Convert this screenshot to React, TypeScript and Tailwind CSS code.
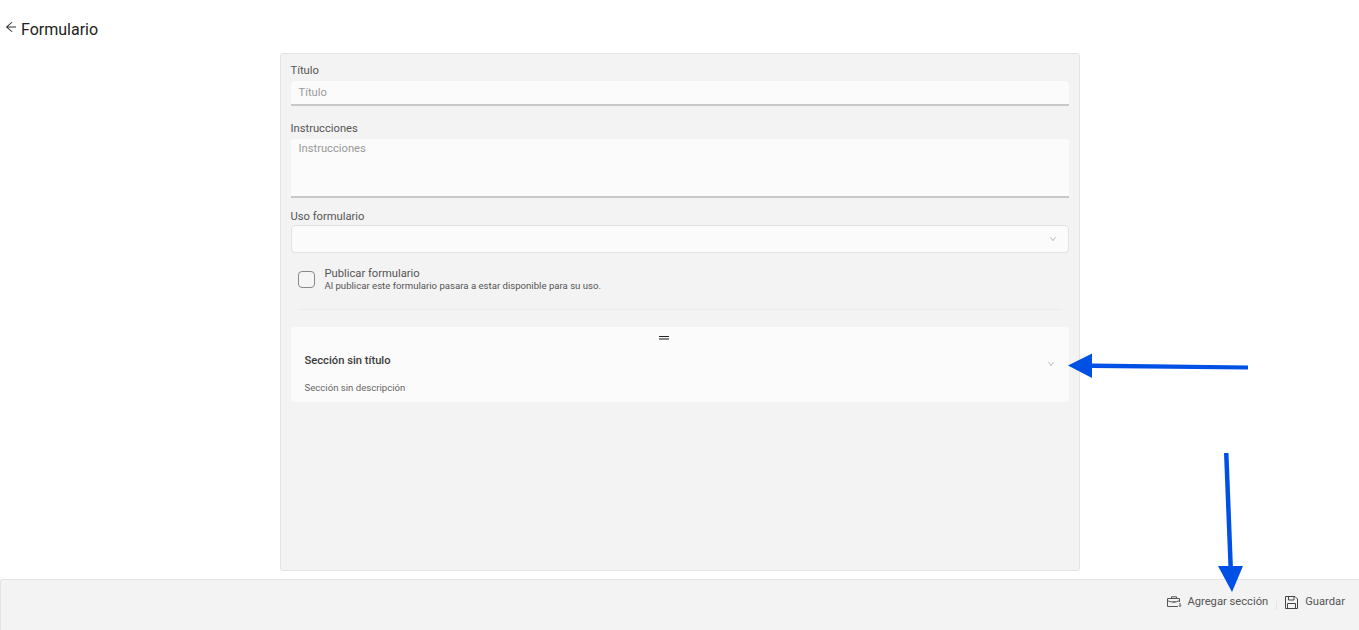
import { AiOutlineArrowLeft, AiOutlineDown } from "react-icons/ai";

function Label({ children }: { children: string }) {
  return <label className="block text-[11.2px] leading-[14px] text-[#555]">{children}</label>;
}

function BriefcaseIcon() {
  return (
    <svg width="15" height="12" viewBox="0 0 15 12" fill="none" stroke="#555" strokeWidth="1">
      <path d="M4.5 2.5V.8h5v1.7" />
      <path d="M12.5 6V2.5H.5v8h10.5" />
      <path d="M.5 4.5c3 2 9 2 12 0" />
      <path d="M5.5 6h3" />
      <path d="M13 7v3.5M12 9.5l1 1 1-1" />
    </svg>
  );
}

function SaveIcon() {
  return (
    <svg width="13" height="13" viewBox="0 0 13 13" fill="none" stroke="#444" strokeWidth="1">
      <path d="M.5.5h9.5l2.5 2.5v9.5H.5z" />
      <path d="M3.5.5v3.5h5.5V.5" />
      <path d="M2.5 12.5V7.5h8v5" />
    </svg>
  );
}

export default function App() {
  return (
    <div className="relative flex h-[630px] flex-col overflow-hidden bg-white font-['Roboto',sans-serif]">
      <header className="flex h-[53px] items-start pl-1 pt-[20px]">
        <AiOutlineArrowLeft className="h-[14px] w-[14px] text-[#333]" />
        <h1 className="ml-[3px] text-[16px] leading-[19px] text-[#222]">Formulario</h1>
      </header>

      <main className="mx-auto h-[518px] w-[800px] rounded-[3px] border border-[#e4e4e4] bg-[#f3f3f3] px-[10px] pt-[10px]">
        <Label>Título</Label>
        <div className="mt-[3px] flex h-[25px] items-center rounded-t-[4px] border-b-2 border-[#c8c8c8] bg-[#fbfbfb] px-2 pt-[2px] text-[11.2px] text-[#999]">
          Título
        </div>

        <div className="mt-[16px]">
          <Label>Instrucciones</Label>
        </div>
        <div className="mt-[3px] h-[59px] rounded-t-[4px] border-b-2 border-[#c8c8c8] bg-[#fbfbfb] px-2 pt-[3px] text-[11.2px] leading-[14px] text-[#999]">
          Instrucciones
        </div>

        <div className="mt-[12px]">
          <Label>Uso formulario</Label>
        </div>
        <div className="mt-px flex h-[28px] items-center justify-end rounded-[4px] border border-[#e2e2e2] bg-[#fbfbfb] pr-[11px]">
          <AiOutlineDown className="h-[8px] w-[8px] text-[#b0b0b0]" />
        </div>

        <div className="mt-[14px] flex items-center pl-[7px]">
          <span className="h-[17px] w-[17px] rounded-[4px] border border-[#888] bg-[#f5f5f5]" />
          <div className="ml-[10px]">
            <p className="text-[11.2px] leading-[13px] text-[#555]">Publicar formulario</p>
            <p className="text-[9.6px] leading-[11px] text-[#555]">
              Al publicar este formulario pasara a estar disponible para su uso.
            </p>
          </div>
        </div>

        <hr className="mx-[7px] mt-[18px] border-[#ebebeb]" />

        <section className="relative mt-[17px] h-[75px] rounded-[4px] bg-[#fbfbfb] px-[13px]">
          <div className="mx-auto flex w-[10px] -translate-x-[16px] flex-col gap-[1px] pt-[9px]">
            <span className="h-px w-[10px] bg-[#222]" />
            <span className="h-[2px] w-[10px] bg-[#888]" />
          </div>
          <div className="mt-[14px] flex items-center justify-between pl-px pr-[1px]">
            <h2 className="text-[11.2px] font-medium leading-[14px] text-[#3a3a3a]">Sección sin título</h2>
            <AiOutlineDown className="mt-[6px] h-[8px] w-[8px] text-[#b0b0b0]" />
          </div>
          <p className="mt-[14px] pl-px text-[9.6px] leading-[11px] text-[#666]">Sección sin descripción</p>
        </section>
      </main>

      <footer className="mt-2 flex h-[51px] items-center justify-end rounded-tl-[3px] border-t border-l border-[#e4e4e4] bg-[#f3f3f3] pb-[6px] pr-[14px] text-[11.2px] text-[#555]">
        <BriefcaseIcon />
        <span className="ml-[5px]">Agregar sección</span>
        <span className="mx-[8px] mt-[6px] h-[9px] w-px bg-[#e4e4e4]" />
        <SaveIcon />
        <span className="ml-[7px]">Guardar</span>
      </footer>

      {/* annotation arrows drawn over the screenshot */}
      <svg className="absolute left-0 top-0 h-[630px] w-[1359px]" viewBox="0 0 1359 630" fill="#0050e6">
        <path d="M1092 363.5 L1248 365.5 V369.5 L1092 368 Z" />
        <polygon points="1068,365.5 1092,353.5 1092,378" />
        <path d="M1224 453 h4.5 l4.5 116 h-4.5 Z" />
        <polygon points="1218,566 1243,566 1232,592" />
      </svg>
    </div>
  );
}
